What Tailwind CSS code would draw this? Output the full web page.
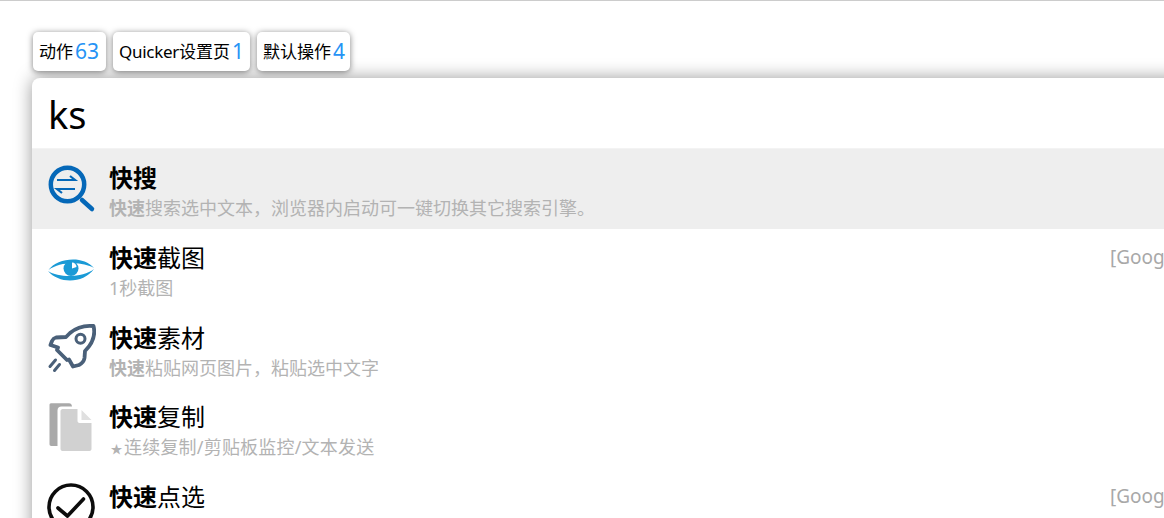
<!DOCTYPE html>
<html lang="zh-CN">
<head>
    <meta charset="UTF-8">
    <title>Quicker Search</title>
    <script src="https://cdn.jsdelivr.net/npm/@tailwindcss/browser@4"></script>
</head>
<body class="bg-white overflow-hidden h-[518px] font-['Noto_Sans','Noto_Sans_CJK_SC',sans-serif]">
    <div class="border-t border-[#cccccc] h-[518px] overflow-hidden pl-[32px] pt-[31px]">
        <!-- category tabs -->
        <div class="flex gap-[7px] h-[39px] ml-px">
            <div class="flex items-center gap-[2px] pl-[6px] pr-[7px] rounded-[5px] bg-white shadow-[0_1px_6px_rgba(0,0,0,0.5)] text-[17px] text-black">动作<span class="text-[21px] text-[#2693f5]">63</span></div>
            <div class="flex items-center gap-[2px] pl-[6px] pr-[6px] rounded-[5px] bg-white shadow-[0_1px_6px_rgba(0,0,0,0.5)] text-[17px] text-black"><span><span class="tracking-[-0.3px]">Quicker</span>设置页</span><span class="text-[21px] text-[#2693f5]">1</span></div>
            <div class="flex items-center gap-[2px] pl-[6px] pr-[5px] rounded-[5px] bg-white shadow-[0_1px_6px_rgba(0,0,0,0.5)] text-[17px] text-black">默认操作<span class="text-[21px] text-[#2693f5]">4</span></div>
        </div>

        <!-- search panel -->
        <div class="mt-[7px] w-[1300px] rounded-t-[8px] bg-white shadow-[0_0_18px_rgba(0,0,0,0.4)]">
            <div class="h-[70px] pl-[16px] pt-[2px] flex items-center text-[38px] leading-none text-black">ks</div>
            <div class="border-t border-[#f3f3f3]">

                <div class="h-[80px] flex bg-[#eeeeee]">
                    <div class="w-[77px] flex items-center justify-center">
                        <svg width="50" height="50" viewBox="0 0 50 50" fill="none">
                            <circle cx="21.5" cy="20.5" r="16.7" stroke="#0568b8" stroke-width="4.5"/>
                            <path d="M36 36 L46 45" stroke="#0568b8" stroke-width="4.5" stroke-linecap="round"/>
                            <path d="M11 16 H29 L24 12" stroke="#0568b8" stroke-width="2.2"/>
                            <path d="M29 25 H11 L16 29" stroke="#0568b8" stroke-width="2.2"/>
                        </svg>
                    </div>
                    <div class="flex-1 pt-[11px]">
                        <div class="text-[24px] leading-[36px] font-bold text-black">快搜</div>
                        <div class="text-[18px] leading-[25px] text-[#b3b3b3]"><b>快速</b>搜索选中文本，浏览器内启动可一键切换其它搜索引擎。</div>
                    </div>
                </div>

                <div class="h-[79.6px] flex">
                    <div class="w-[77px] flex items-center justify-center">
                        <svg width="48" height="24" viewBox="0 0 48 24" fill="none">
                            <path d="M1.5 13 C10 1 36 -2 47 11 C36 5 14 4 1.5 13Z" fill="#1a9ad6"/>
                            <path d="M1 14 C12 27 36 27 47 12 C36 21 12 21 1 14Z" fill="#1a9ad6"/>
                            <circle cx="24" cy="11.5" r="7.5" fill="#1a9ad6"/>
                            <path d="M25 5.5 a4.5 4.5 0 0 1 4.5 4.5 l-4.5 1.5 z" fill="#ffffff"/>
                        </svg>
                    </div>
                    <div class="flex-1 pt-[11px]">
                        <div class="text-[24px] leading-[36px] text-black"><b>快速</b>截图</div>
                        <div class="text-[18px] leading-[25px] text-[#b3b3b3]">1秒截图</div>
                    </div>
                    <div class="w-[268px] pt-[15px] text-[19px] leading-[26px] text-[#a8a8a8] pl-[46px]">[Goog</div>
                </div>

                <div class="h-[79.6px] flex">
                    <div class="w-[77px] flex items-center justify-center">
                        <svg width="50" height="50" viewBox="0 0 50 50" fill="none" stroke="#4a6079" stroke-linecap="round" stroke-linejoin="round">
                            <path d="M47.5 3 C38 2 31 4 24 10 L20 14 L10 14.5 C8 15 7 16 6 18 L4.5 22 L12 24.5 L11 27 L21 37 L23 36.5 L27 43.5 L33 42 C37 40 38 38 38.5 35 L39 28 C46 21 50 13 47.5 3Z" stroke-width="3.8"/>
                            <circle cx="34.5" cy="15.8" r="4.5" stroke-width="3"/>
                            <path d="M9.5 37 L4 43.5 M13.5 41.5 L8.5 47.5" stroke-width="3"/>
                        </svg>
                    </div>
                    <div class="flex-1 pt-[11px]">
                        <div class="text-[24px] leading-[36px] text-black"><b>快速</b>素材</div>
                        <div class="text-[18px] leading-[25px] text-[#b3b3b3]"><b>快速</b>粘贴网页图片，粘贴选中文字</div>
                    </div>
                </div>

                <div class="h-[79.6px] flex">
                    <div class="w-[77px] flex items-center justify-center">
                        <svg class="-mt-[2px]" width="50" height="50" viewBox="0 0 50 50">
                            <path d="M5 1.2 H23 C25 1.2 26 3 26 4.5 H15.5 C13 4.5 11.5 6 11.5 8.5 V44 H5.5 C4 44 3.5 43 3.5 42 V3 C3.5 2 4 1.2 5 1.2Z" fill="#a9a9a9"/>
                            <path d="M14.5 9 C14.5 8 15.5 7 16.5 7 H31.5 V19 C31.5 20 32.5 21 33.5 21 H45.5 V47 C45.5 48 44.5 49 43.5 49 H16.5 C15.5 49 14.5 48 14.5 47Z" fill="#d1d1d1"/>
                            <path d="M35.5 8 L45.5 18 H35.5Z" fill="#e0e0e0"/>
                        </svg>
                    </div>
                    <div class="flex-1 pt-[11px]">
                        <div class="text-[24px] leading-[36px] text-black"><b>快速</b>复制</div>
                        <div class="text-[18px] leading-[25px] text-[#b3b3b3]"><span class="inline-block w-[15px] text-center text-[12px]">★</span><span class="tracking-[0.2px]">连续复制/剪贴板监控/文本发送</span></div>
                    </div>
                </div>

                <div class="h-[79.6px] flex">
                    <div class="w-[77px] flex items-center justify-center">
                        <svg class="-mt-[2px]" width="50" height="50" viewBox="0 0 50 50" fill="none" stroke="#0c0c0c">
                            <circle cx="25" cy="25" r="22" stroke-width="3.6"/>
                            <path d="M12 26 L21.5 34 L37.5 17" stroke-width="3.6" stroke-linecap="round" stroke-linejoin="round"/>
                        </svg>
                    </div>
                    <div class="flex-1 pt-[11px]">
                        <div class="text-[24px] leading-[36px] text-black"><b>快速</b>点选</div>
                    </div>
                    <div class="w-[268px] pt-[15px] text-[19px] leading-[26px] text-[#a8a8a8] pl-[46px]">[Goog</div>
                </div>

            </div>
        </div>
    </div>
</body>
</html>
